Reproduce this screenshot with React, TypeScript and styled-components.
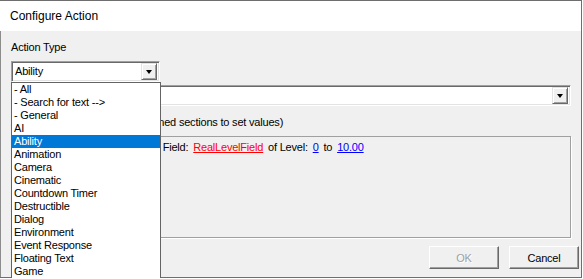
import React from "react";
import styled, { createGlobalStyle } from "styled-components";

const GlobalStyle = createGlobalStyle`
  html, body {
    margin: 0;
    padding: 0;
    overflow: hidden;
    background: #ffffff;
  }
  body {
    font-family: "Liberation Sans", Arial, sans-serif;
  }
`;

const Window = styled.div`
  box-sizing: border-box;
  width: 582px;
  height: 278px;
  border-top: 1px solid #6e6e6e;
  border-right: 1px solid #6e6e6e;
  border-bottom: 1px solid #6e6e6e;
  display: flex;
  flex-direction: column;
  background: #f0f0f0;
`;

const TitleBar = styled.div`
  height: 30px;
  flex: none;
  display: flex;
  align-items: center;
  padding-left: 10px;
  background: #ffffff;
  color: #000000;
  font-size: 12px;
`;

const Body = styled.div`
  flex: 1;
  display: flex;
  flex-direction: column;
  border-left: 1px solid #8c8c8c;
  font-size: 11px;
  letter-spacing: -0.2px;
  color: #000000;
`;

const Form = styled.div`
  display: flex;
  flex-direction: column;
  padding: 10px 10px 0 10px;
`;

const Label = styled.div<{ $gap?: number }>`
  line-height: 13px;
  height: 13px;
  white-space: nowrap;
  margin-top: ${(p) => p.$gap ?? 0}px;
`;

const ComboWrap = styled.div<{ $gap?: number; $width?: number }>`
  position: relative;
  margin-top: ${(p) => p.$gap ?? 0}px;
  width: ${(p) => (p.$width ? `${p.$width}px` : "100%")};
`;

const Combo = styled.div`
  box-sizing: border-box;
  height: 21px;
  width: 100%;
  display: flex;
  align-items: center;
  background: #ffffff;
  border: 1px solid;
  border-color: #a0a0a0 #ffffff #ffffff #a0a0a0;
  box-shadow: inset 1px 1px 0 #696969, inset -1px -1px 0 #e3e3e3;
  padding: 2px 2px 2px 3px;
`;

const ComboText = styled.span`
  flex: 1;
  line-height: 13px;
  white-space: nowrap;
`;

const ComboButton = styled.div`
  box-sizing: border-box;
  width: 16px;
  height: 17px;
  display: flex;
  align-items: center;
  justify-content: center;
  background: #f0f0f0;
  border: 1px solid;
  border-color: #e3e3e3 #696969 #696969 #e3e3e3;
  box-shadow: inset 1px 1px 0 #ffffff, inset -1px -1px 0 #a0a0a0;
`;

const Arrow = styled.span`
  width: 0;
  height: 0;
  border-left: 3.5px solid transparent;
  border-right: 3.5px solid transparent;
  border-top: 4px solid #000000;
  margin-top: 1px;
`;

const DropList = styled.ul`
  position: absolute;
  z-index: 10;
  top: 21px;
  left: 0;
  width: 150px;
  height: 200px;
  margin: 0;
  padding: 0;
  list-style: none;
  box-sizing: border-box;
  background: #ffffff;
  border: 1px solid #646464;
  overflow: hidden;
`;

const DropItem = styled.li<{ $selected?: boolean }>`
  height: 13px;
  line-height: 13px;
  padding-left: 2px;
  white-space: nowrap;
  background: ${(p) => (p.$selected ? "#0078d7" : "transparent")};
  color: ${(p) => (p.$selected ? "#ffffff" : "#000000")};
`;

const Panel = styled.div`
  box-sizing: border-box;
  margin-top: 7px;
  height: 102px;
  border: 1px solid #a0a0a0;
  box-shadow: 1px 1px 0 #ffffff;
  padding: 4px 4px;
  line-height: 13px;
  white-space: nowrap;
  overflow: hidden;
`;

const Param = styled.span<{ $kind: "field" | "value" }>`
  color: ${(p) => (p.$kind === "field" ? "#ff0000" : "#0000ff")};
  text-decoration: underline;
  margin: 0 2px 0 2px;
  cursor: pointer;
`;

const Footer = styled.div`
  display: flex;
  justify-content: flex-end;
  gap: 10px;
  padding: 8px 2px 0 0;
`;

const Button = styled.button`
  box-sizing: border-box;
  width: 70px;
  height: 23px;
  padding: 0;
  font-family: "Liberation Sans", Arial, sans-serif;
  font-size: 11px;
  letter-spacing: -0.2px;
  color: #000000;
  background: #f0f0f0;
  border: 1px solid;
  border-color: #ffffff #696969 #696969 #ffffff;
  box-shadow: inset -1px -1px 0 #a0a0a0;

  &:disabled {
    color: #a0a0a0;
    text-shadow: 1px 1px 0 #ffffff;
  }
`;

const actionTypes = [
  "- All",
  "- Search for text -->",
  "- General",
  "AI",
  "Ability",
  "Animation",
  "Camera",
  "Cinematic",
  "Countdown Timer",
  "Destructible",
  "Dialog",
  "Environment",
  "Event Response",
  "Floating Text",
  "Game",
  "Game Cache",
];

export default function App() {
  const selected = "Ability";

  return (
    <>
      <GlobalStyle />
      <Window>
        <TitleBar>Configure Action</TitleBar>
        <Body>
          <Form>
            <Label>Action Type</Label>
            <ComboWrap $gap={7} $width={149}>
              <Combo>
                <ComboText>{selected}</ComboText>
                <ComboButton>
                  <Arrow />
                </ComboButton>
              </Combo>
              <DropList>
                {actionTypes.map((t) => (
                  <DropItem key={t} $selected={t === selected}>
                    {t}
                  </DropItem>
                ))}
              </DropList>
            </ComboWrap>
            <ComboWrap $gap={3}>
              <Combo>
                <ComboText>Set Ability Real Level Field</ComboText>
                <ComboButton>
                  <Arrow />
                </ComboButton>
              </Combo>
            </ComboWrap>
            <Label $gap={10}>
              Action Text (Click on the underlined sections to set values)
            </Label>
            <Panel>
              Set Ability: <Param $kind="field">Ability</Param>'s Real Level Field:{" "}
              <Param $kind="field">RealLevelField</Param> of Level:{" "}
              <Param $kind="value">0</Param> to <Param $kind="value">10.00</Param>
            </Panel>
          </Form>
          <Footer>
            <Button disabled>OK</Button>
            <Button>Cancel</Button>
          </Footer>
        </Body>
      </Window>
    </>
  );
}
